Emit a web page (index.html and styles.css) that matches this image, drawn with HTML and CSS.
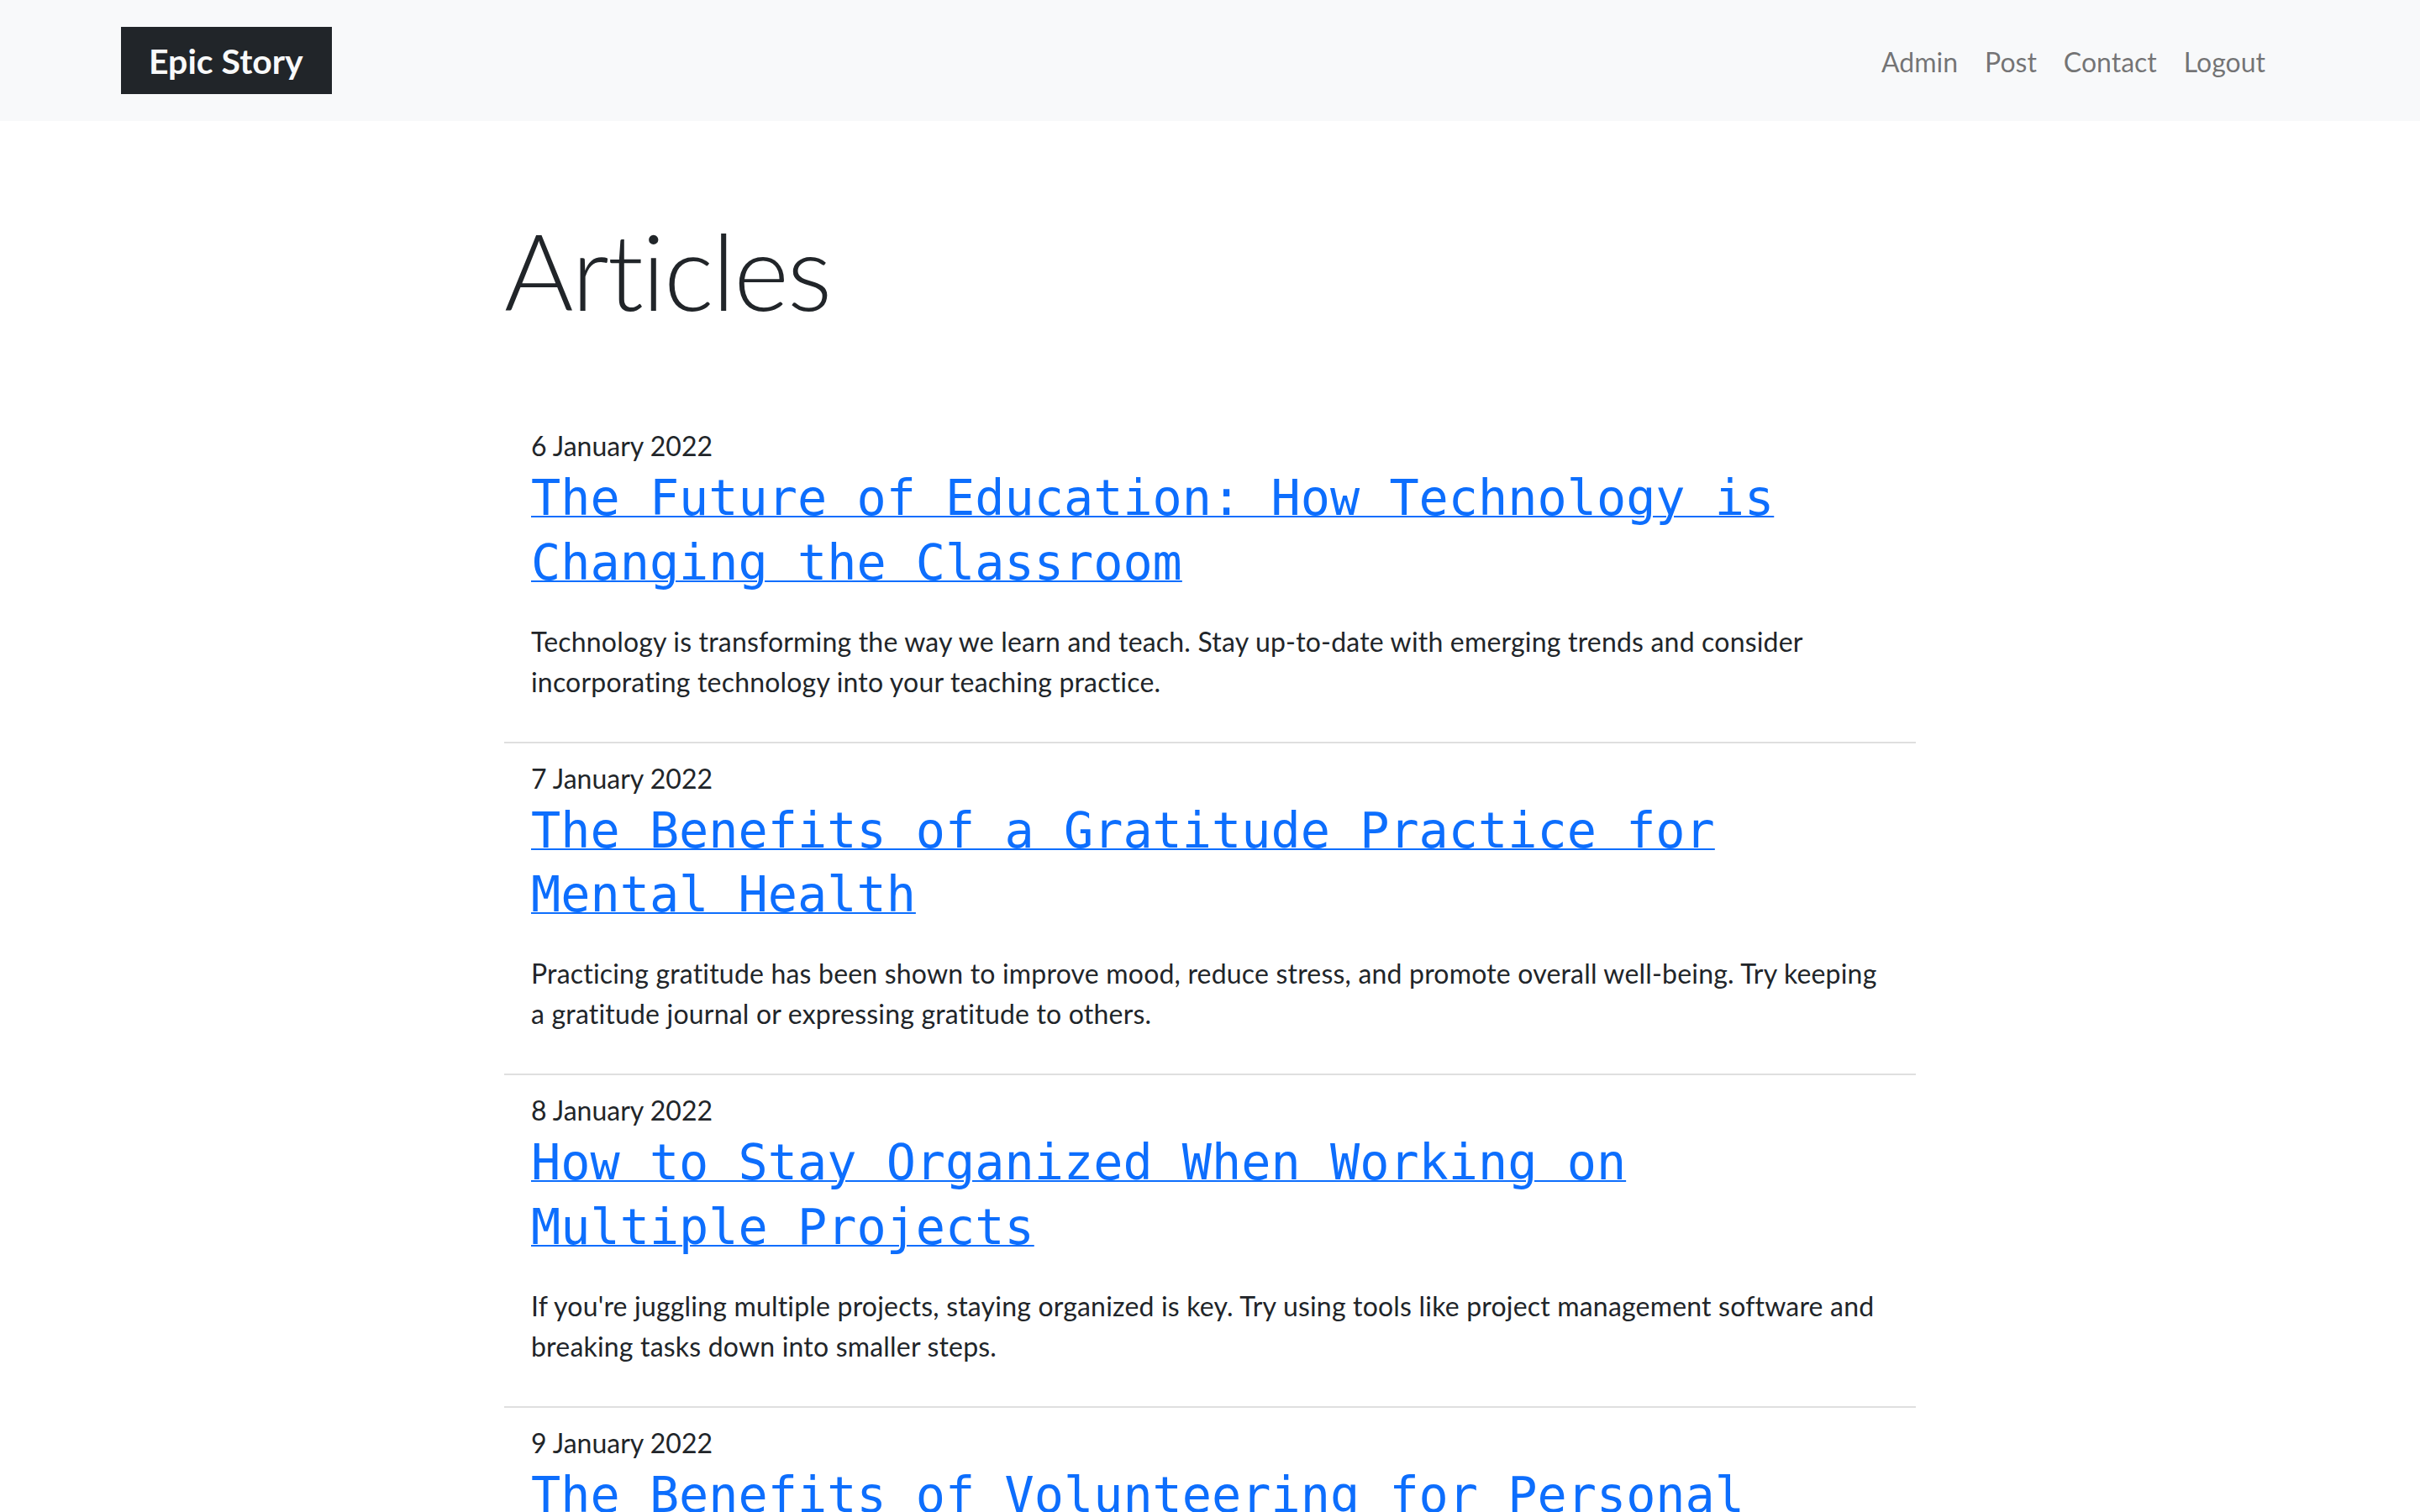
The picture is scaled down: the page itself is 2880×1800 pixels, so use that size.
FILE: index.html
```html
<!DOCTYPE html>
<html lang="en">
<head>
<meta charset="utf-8">
<title>Epic Story</title>
<link rel="stylesheet" href="styles.css">
</head>
<body>
<nav class="navbar">
  <a class="brand" href="#">Epic Story</a>
  <ul class="nav">
    <li><a class="nav-link" href="#">Admin</a></li>
    <li><a class="nav-link" href="#">Post</a></li>
    <li><a class="nav-link" href="#">Contact</a></li>
    <li><a class="nav-link" href="#">Logout</a></li>
  </ul>
</nav>
<main class="page">
  <h1 class="page-title">Articles</h1>
  <div class="list">
    <article class="item">
      <div class="date">6 January 2022</div>
      <h2 class="title"><a href="#">The Future of Education: How Technology is Changing the Classroom</a></h2>
      <p class="summary">Technology is transforming the way we learn and teach. Stay up-to-date with emerging trends and consider incorporating technology into your teaching practice.</p>
    </article>
    <article class="item">
      <div class="date">7 January 2022</div>
      <h2 class="title"><a href="#">The Benefits of a Gratitude Practice for Mental Health</a></h2>
      <p class="summary">Practicing gratitude has been shown to improve mood, reduce stress, and promote overall well-being. Try keeping a gratitude journal or expressing gratitude to others.</p>
    </article>
    <article class="item">
      <div class="date">8 January 2022</div>
      <h2 class="title"><a href="#">How to Stay Organized When Working on Multiple Projects</a></h2>
      <p class="summary">If you're juggling multiple projects, staying organized is key. Try using tools like project management software and breaking tasks down into smaller steps.</p>
    </article>
    <article class="item">
      <div class="date">9 January 2022</div>
      <h2 class="title"><a href="#">The Benefits of Volunteering for Personal Growth</a></h2>
      <p class="summary">Volunteering can help you build new skills, meet new people, and gain a greater sense of purpose. Look for opportunities in your community that match your interests.</p>
    </article>
  </div>
</main>
</body>
</html>
```
FILE: styles.css
```css
* { box-sizing: border-box; }

html, body {
  margin: 0;
  padding: 0;
}

body {
  font-family: "Lato", "Liberation Sans", sans-serif;
  font-size: 32px;
  line-height: 48px;
  color: #212529;
  background: #ffffff;
}

.navbar {
  display: flex;
  align-items: center;
  justify-content: space-between;
  height: 144px;
  padding: 32px 168px 32px 144px;
  background: #f8f9fa;
}

.brand {
  display: block;
  height: 80px;
  padding: 11px 34px 9px 33px;
  background: #212529;
  color: #f8f9fa;
  font-size: 41px;
  line-height: 60px;
  font-weight: 700;
  text-decoration: none;
}

.nav {
  display: flex;
  list-style: none;
  margin: 3px 0 0;
  padding: 0;
}

.nav-link {
  display: block;
  padding: 0 16px;
  font-size: 32px;
  line-height: 48px;
  color: rgba(0, 0, 0, 0.55);
  text-decoration: none;
}

.page {
  max-width: 1680px;
  margin: 0 auto;
  padding-top: 102px;
}

.page-title {
  margin: 0 0 92px;
  font-size: 126px;
  line-height: 151px;
  font-weight: 300;
  letter-spacing: -2px;
  color: #212529;
}

.item {
  padding: 16px 32px;
  border-bottom: 2px solid #dfdfdf;
}

.date {
  font-size: 32px;
  line-height: 48px;
  margin-top: 2px;
  margin-bottom: -2px;
}

.title {
  margin: 2px 0 31px;
  font-family: "DejaVu Sans Mono", monospace;
  font-size: 58.5px;
  line-height: 76.8px;
  font-weight: 400;
}

.title a {
  color: #0d6efd;
  text-decoration: underline;
  text-decoration-thickness: 2px;
}

.summary {
  margin: 0 0 31px;
  font-size: 32px;
  line-height: 48px;
  letter-spacing: 0.19px;
}
```
